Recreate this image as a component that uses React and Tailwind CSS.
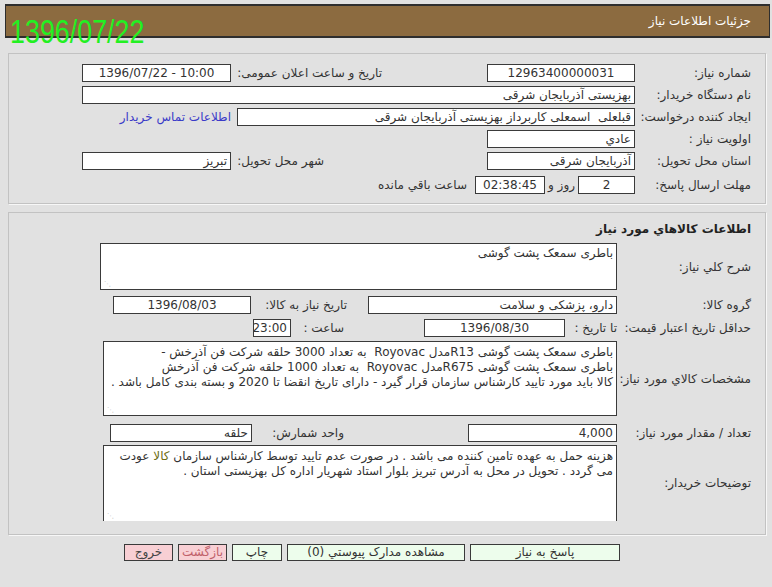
import React from "react";

// جزئیات اطلاعات نیاز - فرم نمایش
const Field = ({ className = "", center = false, children }) => (
  <div
    className={`h-[18px] shrink-0 overflow-hidden whitespace-nowrap border border-[#3a3a3a] bg-white px-[3px] leading-[16px] text-[#333] ${
      center ? "text-center" : "text-right"
    } ${className}`}
  >
    {children}
  </div>
);

const Label = ({ className = "w-[116px]", children }) => (
  <div className={`shrink-0 whitespace-nowrap text-right text-[#333] ${className}`}>
    {children}
  </div>
);

const Area = ({ className = "", open = false, children }) => (
  <div
    className={`relative shrink-0 overflow-hidden border-[#3a3a3a] bg-white px-[3px] pt-[2px] text-right leading-[15px] text-[#333] ${
      open ? "border-x border-t" : "border"
    } ${className}`}
  >
    {children}
    <span className="absolute bottom-[1px] left-[3px] text-[7px] leading-none text-[#bbb]">⋰</span>
  </div>
);

const Btn = ({ className = "", children }) => (
  <button
    className={`h-[17px] shrink-0 border border-[#3a3a3a] text-[12px] leading-[15px] ${className}`}
  >
    {children}
  </button>
);

export default function App() {
  return (
    <div
      dir="rtl"
      className="relative h-[587px] w-[772px] overflow-hidden bg-[#e1e1e1] pt-[4px] font-['DejaVu_Sans',sans-serif] text-[12px]"
    >
      {/* سربرگ */}
      <div className="ml-[5px] mr-[2px] flex h-[34px] items-center border-y-2 border-x border-[#2e2e2e] bg-[#8c6b40] pr-[18px] text-[12px] text-white">
        جزئیات اطلاعات نیاز
      </div>
      <div
        dir="ltr"
        className="absolute left-[10px] top-[14px] origin-left scale-x-[0.79] font-['Liberation_Sans',sans-serif] text-[34px] leading-[34px] text-[#22f022]"
      >
        1396/07/22
      </div>

      {/* اطلاعات نیاز */}
      <div className="ml-[8px] mr-[6px] mt-[15px] flex flex-col gap-[4px] border border-[#c2c2c2] pb-[9px] pr-[14px] pt-[10px] shadow-[1px_1px_0_#f7f7f7]">
        <div className="flex items-center">
          <Label>شماره نیاز:</Label>
          <Field center className="w-[148px]">12963400000031</Field>
          <div className="w-[105px] shrink-0" />
          <Label className="w-[151px]">تاریخ و ساعت اعلان عمومی:</Label>
          <Field center className="w-[149px]">
            <span dir="ltr">1396/07/22 - 10:00</span>
          </Field>
        </div>
        <div className="flex items-center">
          <Label>نام دستگاه خریدار:</Label>
          <Field className="w-[553px]">بهزیستی آذربایجان شرقی</Field>
        </div>
        <div className="flex items-center">
          <Label>ایجاد کننده درخواست:</Label>
          <Field className="w-[398px]">قبلعلی&nbsp; اسمعلی کاربرداز بهزیستی آذربایجان شرقی</Field>
          <a className="mr-[6px] whitespace-nowrap text-[#3a3ac8]">اطلاعات تماس خریدار</a>
        </div>
        <div className="flex items-center">
          <Label>اولویت نیاز :</Label>
          <Field className="w-[148px]">عادي</Field>
        </div>
        <div className="flex items-center">
          <Label>استان محل تحویل:</Label>
          <Field className="w-[148px]">آذربایجان شرقی</Field>
          <div className="w-[163px] shrink-0" />
          <Label className="w-[93px]">شهر محل تحویل:</Label>
          <Field className="w-[149px]">تبریز</Field>
        </div>
        <div className="mt-[2px] flex items-center">
          <Label>مهلت ارسال پاسخ:</Label>
          <Field center className="w-[57px]">2</Field>
          <span className="mx-[3px] whitespace-nowrap text-[#333]">روز و</span>
          <Field center className="w-[70px]">02:38:45</Field>
          <span className="mr-[8px] whitespace-nowrap text-[#333]">ساعت باقي مانده</span>
        </div>
      </div>

      {/* اطلاعات کالاها */}
      <div className="ml-[8px] mr-[6px] mt-[8px] flex h-[323px] flex-col overflow-hidden border border-[#c2c2c2] pr-[14px] pt-[8px] shadow-[1px_1px_0_#f7f7f7]">
        <div className="h-[16px] text-right font-bold leading-[16px] text-[#222]">
          اطلاعات کالاهاي مورد نیاز
        </div>

        <div className="mt-[6px] flex items-center">
          <Label className="w-[134px]">شرح کلي نیاز:</Label>
          <Area className="h-[47px] w-[517px]">باطری سمعک پشت گوشی</Area>
        </div>

        <div className="mt-[6px] flex items-center">
          <Label className="w-[134px]">گروه کالا:</Label>
          <Field className="w-[249px]">دارو، پزشکی و سلامت</Field>
          <div className="w-[21px] shrink-0" />
          <Label className="w-[96px]">تاریخ نیاز به کالا:</Label>
          <Field center className="w-[138px]">1396/08/03</Field>
        </div>

        <div className="mt-[5px] flex items-center">
          <Label className="w-[134px]">حداقل تاریخ اعتبار قیمت:</Label>
          <Label className="w-[52px]">تا تاریخ :</Label>
          <Field center className="w-[141px]">1396/08/30</Field>
          <div className="w-[80px] shrink-0" />
          <Label className="w-[53px]">ساعت :</Label>
          <Field center className="w-[38px] px-0">23:00</Field>
        </div>

        <div className="mt-[4px] flex items-center">
          <Label className="w-[134px]">مشخصات کالاي مورد نیاز:</Label>
          <Area className="h-[75px] w-[514px] pt-[3px]">
            <div className="whitespace-nowrap">باطری سمعک پشت گوشی R13مدل Royovac&nbsp; به تعداد 3000 حلقه شرکت فن آذرخش -</div>
            <div className="whitespace-nowrap">باطری سمعک پشت گوشی R675مدل Royovac&nbsp; به تعداد 1000 حلقه شرکت فن آذرخش</div>
            <div className="whitespace-nowrap">کالا باید مورد تایید کارشناس سازمان قرار گیرد - دارای تاریخ انقضا تا 2020 و بسته بندی کامل باشد .</div>
          </Area>
        </div>

        <div className="mt-[8px] flex items-center">
          <Label className="w-[134px]">تعداد / مقدار مورد نیاز:</Label>
          <Field className="w-[149px] px-[1px]">4,000</Field>
          <div className="w-[124px] shrink-0" />
          <Label className="w-[92px]">واحد شمارش:</Label>
          <Field className="w-[142px]">حلقه</Field>
        </div>

        <div className="mt-[3px] flex items-center">
          <Label className="w-[134px]">توضیحات خریدار:</Label>
          <Area open className="h-[76px] w-[514px] pt-[3px]">
            <div className="whitespace-nowrap">هزینه حمل به عهده تامین کننده می باشد . در صورت عدم تایید توسط کارشناس سازمان <span className="text-[#6b6b10]">کالا</span> عودت</div>
            <div className="whitespace-nowrap">می گردد . تحویل در محل به آدرس تبریز بلوار استاد شهریار اداره کل بهزیستی استان .</div>
          </Area>
        </div>
      </div>

      {/* دکمه ها */}
      <div className="mt-[9px] flex items-center gap-[5px] pr-[152px]">
        <Btn className="w-[150px] bg-[#edfdec] text-[#333]">پاسخ به نیاز</Btn>
        <Btn className="w-[178px] bg-[#edfdec] text-[#333]">مشاهده مدارک پیوستي (0)</Btn>
        <Btn className="w-[50px] bg-[#edfdec] text-[#333]">چاپ</Btn>
        <Btn className="w-[49px] bg-[#f8cfd4] text-[#c0606a]">بازگشت</Btn>
        <Btn className="w-[49px] bg-[#f8cfd4] text-[#444]">خروج</Btn>
      </div>
    </div>
  );
}
